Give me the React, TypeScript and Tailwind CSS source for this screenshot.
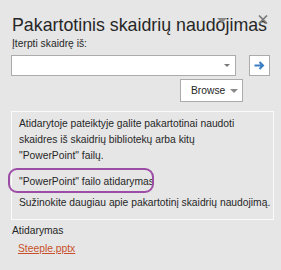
import React from 'react'

const App = () => {
    return (
        <div className="relative w-[281px] h-[270px] bg-[#e6e6e6] text-[#262626] font-['Liberation_Sans',Arial,sans-serif] overflow-hidden">
            <span className="absolute left-[217px] top-[18px] w-0 h-0 border-x-[5px] border-x-transparent border-t-[5px] border-t-[#8a8a8a]"/>
            <svg className="absolute left-[258px] top-[15px]" width="10" height="9" viewBox="0 0 10 9">
                <path d="M1 0.5L9 8.5M9 0.5L1 8.5" stroke="#7a7a7a" strokeWidth="1.7"/>
            </svg>
            <div className="flex flex-col px-[11px] pt-[15px]">
                <h1 className="text-[17.8px] leading-[20px] ml-[1px] whitespace-nowrap">Pakartotinis skaidrių naudojimas</h1>
                <label className="text-[10.3px] leading-[16px] mt-[1px] ml-[1px]">Įterpti skaidrę iš:</label>
                <div className="flex items-center gap-[13px] mt-[3px]">
                    <div className="flex items-center justify-end w-[228px] h-[21px] bg-white border border-[#ababab] pr-[5px]">
                        <span className="w-0 h-0 border-x-[3px] border-x-transparent border-t-[3px] border-t-[#7a7a7a]"/>
                    </div>
                    <button className="flex items-center justify-center w-[21px] h-[21px] bg-white border border-[#ababab]">
                        <svg width="11" height="9" viewBox="0 0 11 9">
                            <path d="M0.5 4.5H9M5.5 1L9 4.5L5.5 8" fill="none" stroke="#3a7dc2" strokeWidth="2"/>
                        </svg>
                    </button>
                </div>
                <div className="flex justify-end pr-[27px] mt-[3px]">
                    <button className="flex items-center gap-[5px] h-[23px] w-[63px] pl-[10px] bg-white border border-[#ababab] text-[10.3px] leading-[16px]">
                        Browse
                        <span className="w-0 h-0 border-x-[4px] border-x-transparent border-t-[4px] border-t-[#8a8a8a]"/>
                    </button>
                </div>
                <div className="mt-[9px] w-[263px] border border-[#fbfbfb] px-[7px] pt-[4px] pb-[8px] text-[10.3px] leading-[16px]">
                    <p className="whitespace-nowrap">
                        Atidarytoje pateiktyje galite pakartotinai naudoti<br/>
                        skaidres iš skaidrių bibliotekų arba kitų<br/>
                        "PowerPoint" failų.
                    </p>
                    <div className="relative mt-[10px]">
                        <span className="absolute left-[-11px] top-[-6px] w-[146px] h-[25px] rounded-[9px] border-2 border-[#9c4ea6]"/>
                        <p>"PowerPoint" failo atidarymas</p>
                    </div>
                    <p className="mt-[5px] whitespace-nowrap">Sužinokite daugiau apie pakartotinį skaidrių naudojimą.</p>
                </div>
                <p className="text-[10.3px] leading-[16px] mt-[3px] ml-[1px]">Atidarymas</p>
                <a className="text-[10.3px] leading-[16px] mt-[2px] ml-[7px] text-[#c8502a] underline">Steeple.pptx</a>
            </div>
        </div>
    )
}

export default App
